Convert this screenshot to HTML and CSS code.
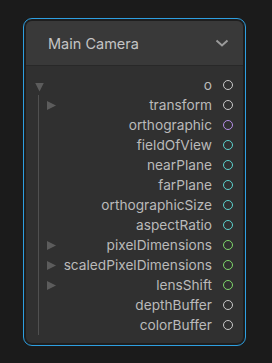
FILE: index.html
```html
<!DOCTYPE html>
<html lang="en">
<head>
    <meta charset="UTF-8">
    <title>Main Camera</title>
    <link rel="stylesheet" href="styles.css">
</head>
<body>
    <div class="node">
        <div class="card">
            <div class="header">
                <span class="title">Main Camera</span>
                <svg class="chevron" width="14" height="8" viewBox="0 0 14 8">
                    <path d="M1.5 1.5 L7 6.5 L12.5 1.5" fill="none" stroke="#9a9a9a" stroke-width="2"/>
                </svg>
            </div>
            <div class="content">
                <div class="row">
                    <span class="caret down"></span>
                    <span class="label">o</span>
                    <span class="port gray"></span>
                </div>
                <div class="children">
                    <div class="row"><span class="caret right"></span><span class="label">transform</span><span class="port gray"></span></div>
                    <div class="row"><span class="label">orthographic</span><span class="port purple"></span></div>
                    <div class="row"><span class="label">fieldOfView</span><span class="port cyan"></span></div>
                    <div class="row"><span class="label">nearPlane</span><span class="port cyan"></span></div>
                    <div class="row"><span class="label">farPlane</span><span class="port cyan"></span></div>
                    <div class="row"><span class="label">orthographicSize</span><span class="port cyan"></span></div>
                    <div class="row"><span class="label">aspectRatio</span><span class="port cyan"></span></div>
                    <div class="row"><span class="caret right"></span><span class="label">pixelDimensions</span><span class="port green"></span></div>
                    <div class="row"><span class="caret right"></span><span class="label">scaledPixelDimensions</span><span class="port green"></span></div>
                    <div class="row"><span class="caret right"></span><span class="label">lensShift</span><span class="port green"></span></div>
                    <div class="row"><span class="label">depthBuffer</span><span class="port gray"></span></div>
                    <div class="row"><span class="label">colorBuffer</span><span class="port gray"></span></div>
                </div>
            </div>
        </div>
    </div>
</body>
</html>
```

FILE: styles.css
```css
body {
    margin: 0;
    background-color: #1b1b1b;
    font-family: Inter, "Noto Sans", sans-serif;
}

.node {
    margin: 18px 0 0 23px;
    width: 223px;
    box-sizing: border-box;
    padding: 2px;
    border: 1px solid #2e9fe0;
    border-radius: 9px;
    background-color: #1e1e1e;
}

.card {
    border-radius: 6px;
    overflow: hidden;
    background-color: #303030;
}

.header {
    height: 44px;
    display: flex;
    align-items: center;
    justify-content: space-between;
    padding: 0 14px 0 22px;
    background-color: #393939;
    border-bottom: 1px solid #282828;
}

.title {
    font-size: 14.5px;
    color: #c4c4c4;
}

.chevron {
    display: block;
}

.content {
    padding: 9px 10px 8px 9px;
}

.row {
    height: 20px;
    display: flex;
    align-items: center;
}

.label {
    flex: 1;
    text-align: right;
    font-size: 13.7px;
    color: #bababa;
    margin-right: 11px;
    white-space: nowrap;
}

.children {
    margin-left: 3px;
    padding-left: 8px;
    border-left: 1px solid #505050;
}

.caret {
    width: 9px;
    height: 9px;
    background-color: #5c5c5c;
}

.caret.down {
    clip-path: polygon(0 0, 100% 0, 50% 100%);
    margin-top: 4px;
}

.caret.right {
    clip-path: polygon(0 0, 100% 50%, 0 100%);
    margin-top: 1px;
}

.port {
    width: 10px;
    height: 10px;
    box-sizing: border-box;
    border-radius: 50%;
    border: 1.5px solid #c8c8c8;
}

.port.purple {
    border-color: #b48ee6;
}

.port.cyan {
    border-color: #5cd2ce;
}

.port.green {
    border-color: #7fd66a;
}
```
